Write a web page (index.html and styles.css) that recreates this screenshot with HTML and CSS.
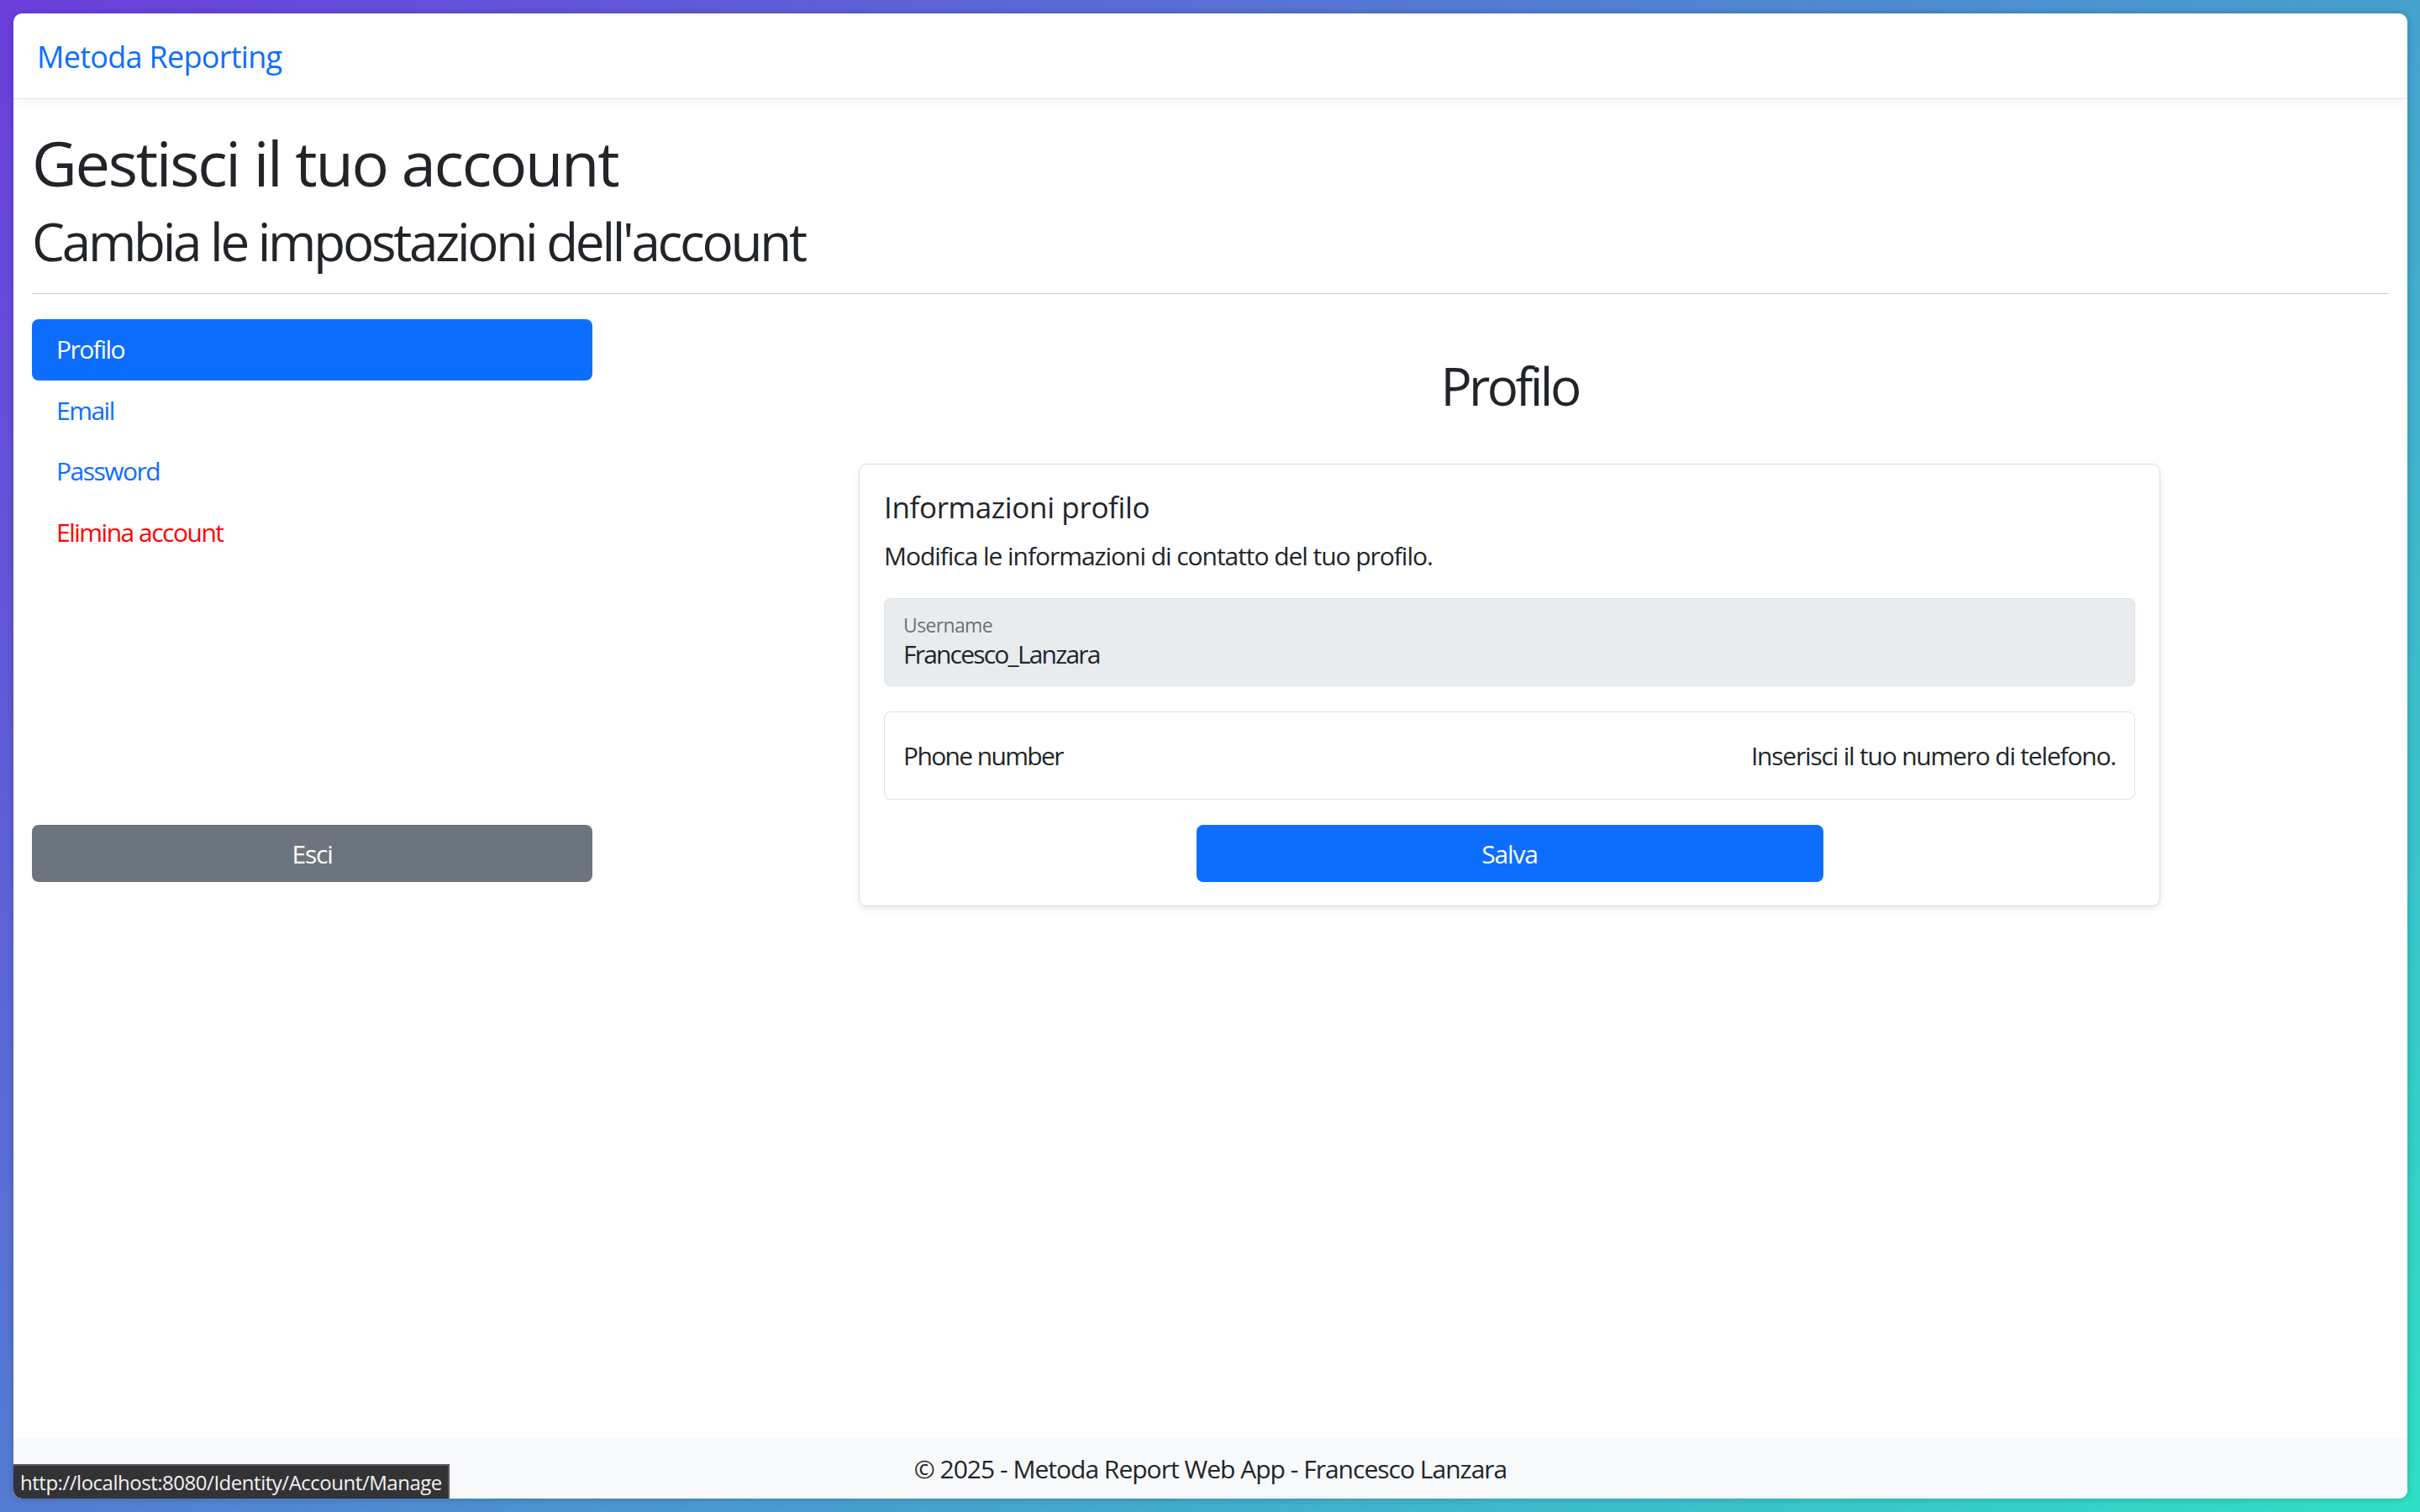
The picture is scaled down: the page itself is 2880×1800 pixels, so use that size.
FILE: index.html
```html
<!DOCTYPE html>
<html lang="it">
<head>
<meta charset="utf-8">
<title>Gestisci il tuo account - Metoda Reporting</title>
<link rel="stylesheet" href="styles.css">
</head>
<body>
<div class="desktop">
  <div class="window">
    <header class="navbar">
      <a class="brand" href="#">Metoda Reporting</a>
    </header>
    <main class="main">
      <h1 class="title">Gestisci il tuo account</h1>
      <h2 class="subtitle">Cambia le impostazioni dell'account</h2>
      <hr class="divider">
      <div class="manage">
        <aside class="side">
          <nav class="pills">
            <a class="pill active" href="#">Profilo</a>
            <a class="pill" href="#">Email</a>
            <a class="pill" href="#">Password</a>
            <a class="pill danger" href="#">Elimina account</a>
          </nav>
          <button class="btn btn-secondary" type="button">Esci</button>
        </aside>
        <section class="content">
          <h2 class="page-title">Profilo</h2>
          <div class="card">
            <h5 class="card-title">Informazioni profilo</h5>
            <p class="card-text">Modifica le informazioni di contatto del tuo profilo.</p>
            <div class="field field-disabled">
              <span class="field-label">Username</span>
              <span class="field-value">Francesco_Lanzara</span>
            </div>
            <div class="field field-phone">
              <span class="phone-label">Phone number</span>
              <span class="phone-hint">Inserisci il tuo numero di telefono.</span>
            </div>
            <button class="btn btn-primary" type="button">Salva</button>
          </div>
        </section>
      </div>
    </main>
    <footer class="footer">© 2025 - Metoda Report Web App - Francesco Lanzara</footer>
    <div class="status">http://localhost:8080/Identity/Account/Manage</div>
  </div>
</div>
</body>
</html>
```
FILE: styles.css
```css
* { box-sizing: border-box; }
html, body { margin: 0; padding: 0; }
body {
  font-family: "Open Sans", "Noto Sans", "Liberation Sans", sans-serif;
  color: #212529;
  letter-spacing: -0.04em;
}
.desktop {
  width: 2880px;
  height: 1800px;
  padding: 16px 15px 16px 16px;
  background: linear-gradient(135deg, #6b3edc 0%, #2fdfc5 100%);
}
.window {
  position: relative;
  height: 100%;
  background: #fff;
  border-radius: 10px;
  overflow: hidden;
  display: flex;
  flex-direction: column;
  box-shadow: 0 0 10px rgba(0, 0, 0, 0.2);
}
.navbar {
  padding: 24px 28px 21px;
  border-bottom: 1px solid #e3e4e6;
  box-shadow: 0 4px 12px rgba(0, 0, 0, 0.04);
}
.brand {
  font-size: 36px;
  line-height: 56px;
  color: #0d6efd;
  text-decoration: none;
  letter-spacing: -0.02em;
}
.main {
  flex: 1;
  padding: 32px 22px 0;
}
.title {
  margin: 0;
  font-size: 74px;
  line-height: 88px;
  font-weight: 400;
  letter-spacing: -0.031em;
}
.subtitle {
  margin: 12px 0 0;
  font-size: 62px;
  line-height: 74px;
  font-weight: 400;
  letter-spacing: -0.053em;
}
.divider {
  margin: 25px 0 30px;
  border: 0;
  border-top: 1px solid #c8c9ca;
}
.manage {
  display: grid;
  grid-template-columns: 667px 1fr;
  column-gap: 45px;
}
.side {
  display: flex;
  flex-direction: column;
}
.pills {
  display: flex;
  flex-direction: column;
}
.pill {
  font-size: 30px;
  line-height: 72.5px;
  padding: 0 30px 0 29px;
  color: #0d6efd;
  border-radius: 8px;
  text-decoration: none;
  letter-spacing: -0.05em;
}
.pill.active {
  background: #0d6efd;
  color: #fff;
}
.pill.danger { color: #ff0000; }
.btn {
  display: block;
  border: 0;
  border-radius: 8px;
  font-family: inherit;
  font-size: 30px;
  letter-spacing: -0.04em;
  height: 68px;
  color: #fff;
  padding: 0;
}
.btn-secondary {
  margin-top: 312px;
  width: 100%;
  background: #6c757d;
}
.content {
  display: flex;
  flex-direction: column;
  align-items: center;
}
.page-title {
  margin: 42px 0 0;
  font-size: 62px;
  line-height: 74px;
  font-weight: 400;
  letter-spacing: -0.058em;
}
.card {
  margin-top: 56px;
  width: 1549px;
  border: 1px solid #dadbdc;
  border-radius: 10px;
  padding: 30px 29px 28px;
  box-shadow: 0 4px 8px rgba(0, 0, 0, 0.075);
}
.card-title {
  margin: 0;
  font-size: 35px;
  line-height: 42px;
  font-weight: 400;
  letter-spacing: -0.01em;
}
.card-text {
  margin: 14px 0 0;
  font-size: 30px;
  line-height: 45px;
  letter-spacing: -0.035em;
}
.field {
  margin-top: 28px;
  height: 105px;
  border: 1px solid #dee2e6;
  border-radius: 8px;
  padding: 0 22px;
}
.field-disabled {
  background: #e9ecef;
  display: flex;
  flex-direction: column;
  padding-top: 16px;
}
.field-label {
  font-size: 23px;
  line-height: 30px;
  color: rgba(33, 37, 41, 0.65);
}
.field-value {
  font-size: 30px;
  line-height: 40px;
  letter-spacing: -0.06em;
}
.field-phone {
  margin-top: 30px;
  display: flex;
  justify-content: space-between;
  align-items: center;
  font-size: 30px;
}
.phone-label { letter-spacing: -0.055em; }
.phone-hint { letter-spacing: -0.04em; }
.btn-primary {
  margin: 30px auto 0;
  width: 746px;
  background: #0d6efd;
}
.footer {
  height: 72px;
  background: #f8f9fa;
  text-align: center;
  font-size: 30px;
  line-height: 45px;
  padding-top: 14px;
  color: #212529;
  letter-spacing: -0.033em;
}
.status {
  position: absolute;
  left: 0;
  bottom: 0;
  width: 519px;
  height: 41px;
  background: #333335;
  border-top: 2px solid #5a5a5c;
  border-right: 2px solid #5a5a5c;
  color: #f2f2f2;
  font-size: 24px;
  line-height: 39px;
  padding-left: 8px;
  white-space: nowrap;
  letter-spacing: -0.02em;
}
```
